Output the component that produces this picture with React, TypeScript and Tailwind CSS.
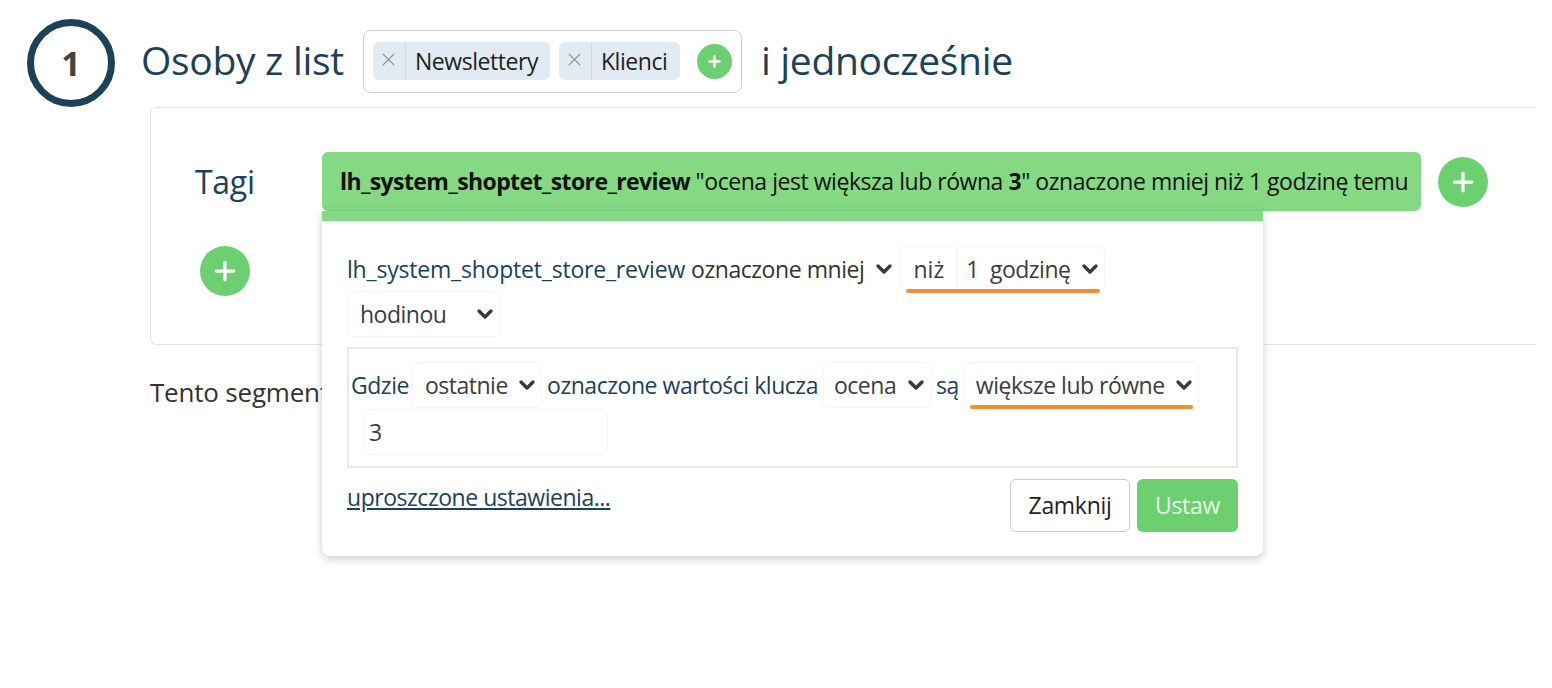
import { ChevronDown, Plus, X } from "lucide-react";

function Chip({ label, width }: { label: string; width: string }) {
  return (
    <span className={`flex h-[38px] items-center rounded-md bg-[#e2ebf3] ${width}`}>
      <span className="flex h-full w-[33px] shrink-0 items-center justify-center border-r border-[#cfd9e2] text-[#8f979e]">
        <X size={21} strokeWidth={1.4} className="-mt-1" />
      </span>
      <span className="pl-[9px] text-[23px] tracking-[-0.44px] text-[#222]">{label}</span>
    </span>
  );
}

function AddButton({ size, icon, stroke }: { size: string; icon: number; stroke: number }) {
  return (
    <span className={`flex shrink-0 items-center justify-center rounded-full bg-[#6ccf70] text-white ${size}`}>
      <Plus size={icon} strokeWidth={stroke} />
    </span>
  );
}

function Chevron({ className = "" }: { className?: string }) {
  return <ChevronDown size={24} strokeWidth={3.4} className={`shrink-0 text-[#3a3a3a] ${className}`} />;
}

// fake select: white box with very faint border
function Select({ label, width, className = "" }: { label: string; width: string; className?: string }) {
  return (
    <span
      className={`inline-flex h-[46px] items-center justify-between rounded-md border border-[#f5f5f5] pr-[2px] text-[23px] tracking-[-0.5px] text-[#3d3d3d] ${width} ${className}`}
    >
      {label}
      <Chevron />
    </span>
  );
}

export default function App() {
  return (
    <div className="relative h-[688px] w-[1552px] overflow-hidden bg-white font-['Open_Sans',sans-serif] text-[#1c4258]">
      {/* heading row */}
      <div className="flex items-center pl-[27px] pt-[19px]">
        <div className="flex h-[88px] w-[88px] shrink-0 items-center justify-center rounded-full border-[7px] border-[#1c4258] text-[34px] font-bold text-[#444]">
          1
        </div>
        <span className="mb-[6px] ml-[26px] text-[39px] tracking-[-0.3px]">Osoby z list</span>
        <div className="mb-[4px] ml-[19px] flex h-[63px] w-[379px] items-center gap-[9px] rounded-lg border border-[#cfcfcf] pl-[9px]">
          <Chip label="Newslettery" width="w-[177px]" />
          <Chip label="Klienci" width="w-[121px]" />
          <AddButton size="ml-[8px] h-[35px] w-[35px]" icon={17} stroke={3.4} />
        </div>
        <span className="mb-[6px] ml-[19px] text-[39px] tracking-[-0.3px]">i jednocześnie</span>
      </div>

      {/* segment panel */}
      <div className="ml-[150px] mr-[16px] h-[238px] rounded-l-md border-y border-l border-[#e4e4e4]">
        <div className="flex items-center pl-[44px] pt-[44px]">
          <span className="w-[127px] text-[32px] tracking-[-0.3px]">Tagi</span>
          <div className="flex h-[59px] w-[1099px] items-center whitespace-nowrap rounded-md bg-[#84d982] pl-[18px] text-[23px] tracking-[-0.46px] text-[#111]">
            <span>
              <b className="tracking-[-0.6px]">lh_system_shoptet_store_review</b> "ocena jest większa lub równa <b>3</b>" oznaczone mniej niż 1 godzinę temu
            </span>
          </div>
          <AddButton size="ml-[17px] h-[50px] w-[50px]" icon={30} stroke={2.6} />
        </div>
        <div className="pl-[49px] pt-[35px]">
          <AddButton size="h-[50px] w-[50px]" icon={30} stroke={2.6} />
        </div>
      </div>

      <p className="ml-[150px] mt-[28px] text-[26px] tracking-[-0.2px] text-[#333]">Tento segment</p>

      {/* popover over the panel */}
      <div className="absolute left-[322px] top-[211px] h-[345px] w-[941px] rounded-b-lg border-t-[10px] border-[#84d982] bg-white px-[25px] pt-[25px] shadow-[0_3px_10px_rgba(0,0,0,0.2)]">
        <div className="flex h-[46px] items-center text-[23px]">
          <span className="tracking-[-0.2px]">lh_system_shoptet_store_review</span>
          <span className="ml-[6px] tracking-[-0.45px] text-[#333]">oznaczone mniej</span>
          <Chevron className="ml-[8px]" />
          <div className="relative ml-[4px] flex">
            <span className="flex h-[46px] w-[57px] items-center justify-center rounded-md border border-[#f5f5f5] text-[#3d3d3d]">
              niż
            </span>
            <Select label="1  godzinę" width="w-[148px] whitespace-pre" className="pl-[8px]" />
            <span className="absolute bottom-[-1px] left-[6px] right-[5px] h-[4px] rounded-full bg-[#ef9133]" />
          </div>
        </div>
        <Select label="hodinou" width="mt-[-1px] w-[153px]" className="pl-3" />

        <div className="mt-[10px] h-[121px] border-2 border-[#e8e8e8] pl-[2px]">
          <div className="mt-[13px] flex h-[46px] items-center text-[23px] tracking-[-0.46px]">
            <span>Gdzie</span>
            <Select label="ostatnie" width="ml-[3px] w-[130px]" className="pl-3" />
            <span className="ml-[5px]">oznaczone wartości klucza</span>
            <Select label="ocena" width="ml-[5px] w-[108px]" className="pl-[10px]" />
            <span className="ml-[5px]">są</span>
            <div className="relative ml-[5px]">
              <Select label="większe lub równe" width="w-[235px]" className="pl-[11px]" />
              <span className="absolute bottom-[-1px] left-[6px] right-[6px] h-[4px] rounded-full bg-[#ef9133]" />
            </div>
          </div>
          <div className="ml-[12px] mt-[1px] flex h-[46px] w-[245px] items-center rounded-md border border-[#f5f5f5] pl-[5px] text-[23px] text-[#3d3d3d]">
            3
          </div>
        </div>

        <div className="mt-[11px] flex items-start justify-between">
          <a className="mt-[1px] text-[23px] tracking-[-0.47px] underline">uproszczone ustawienia...</a>
          <div className="flex gap-[7px]">
            <button className="h-[53px] w-[120px] rounded-md border border-[#c9c9c9] pb-[1px] text-[23px] tracking-[-0.3px] text-[#222]">
              Zamknij
            </button>
            <button className="h-[53px] w-[101px] rounded-md bg-[#6ccf70] pb-[1px] text-[23px] tracking-[-0.3px] text-[#e9fbe9]">
              Ustaw
            </button>
          </div>
        </div>
      </div>
    </div>
  );
}
